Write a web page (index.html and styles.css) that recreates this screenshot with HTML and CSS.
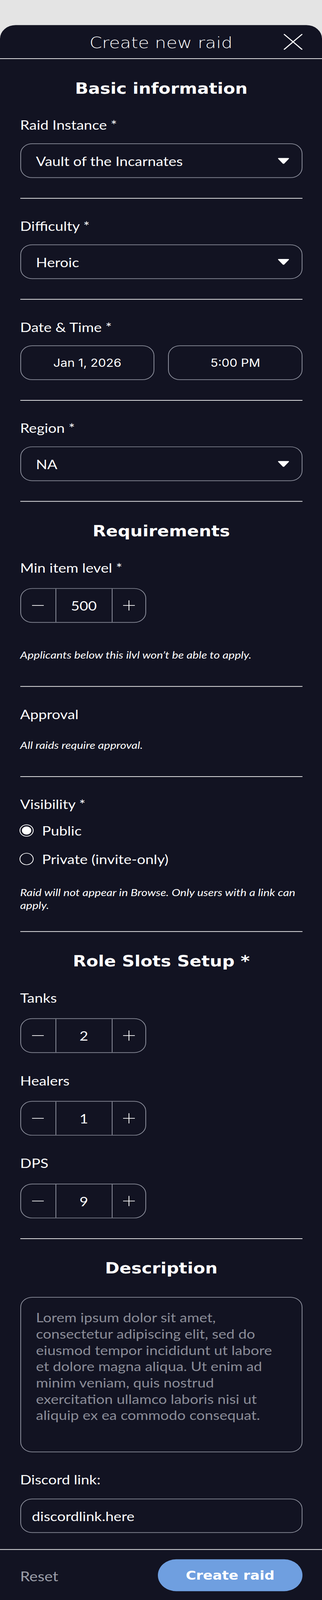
FILE: index.html
```html
<!DOCTYPE html>
<html lang="en">
<head>
<meta charset="utf-8">
<title>Create new raid</title>
<link rel="stylesheet" href="styles.css">
</head>
<body>
<div class="page">
<div class="sheet">
  <header class="sheet-head">
    <h1 class="sheet-title">Create new raid</h1>
    <button class="close" type="button" aria-label="Close">
      <svg viewBox="0 0 48 47" width="48" height="47"><path d="M1.5 1.5 L46.5 45.5 M46.5 1.5 L1.5 45.5" fill="none" stroke="#fff" stroke-width="3" stroke-linecap="round"/></svg>
    </button>
  </header>

  <main class="sheet-body">
    <h2 class="section-title">Basic information</h2>

    <div class="field">
      <div class="label">Raid Instance *</div>
      <div class="control select">
        <span>Vault of the Incarnates</span>
        <svg class="caret" viewBox="0 0 31 19" width="31" height="19"><path d="M3.5 1 H27.5 Q31 1 28.8 4 L17.6 17.2 Q15.5 19.4 13.4 17.2 L2.2 4 Q0 1 3.5 1 Z" fill="#fff"/></svg>
      </div>
    </div>
    <div class="rule"></div>

    <div class="field">
      <div class="label">Difficulty *</div>
      <div class="control select">
        <span>Heroic</span>
        <svg class="caret" viewBox="0 0 31 19" width="31" height="19"><path d="M3.5 1 H27.5 Q31 1 28.8 4 L17.6 17.2 Q15.5 19.4 13.4 17.2 L2.2 4 Q0 1 3.5 1 Z" fill="#fff"/></svg>
      </div>
    </div>
    <div class="rule"></div>

    <div class="field">
      <div class="label">Date &amp; Time *</div>
      <div class="datetime">
        <div class="control picker">Jan 1, 2026</div>
        <div class="control picker">5:00 PM</div>
      </div>
    </div>
    <div class="rule"></div>

    <div class="field">
      <div class="label">Region *</div>
      <div class="control select">
        <span>NA</span>
        <svg class="caret" viewBox="0 0 31 19" width="31" height="19"><path d="M3.5 1 H27.5 Q31 1 28.8 4 L17.6 17.2 Q15.5 19.4 13.4 17.2 L2.2 4 Q0 1 3.5 1 Z" fill="#fff"/></svg>
      </div>
    </div>
    <div class="rule"></div>

    <h2 class="section-title">Requirements</h2>

    <div class="field stepper-field">
      <div class="label">Min item level *</div>
      <div class="stepper">
        <span class="step minus"><i class="bar-h"></i></span>
        <span class="step-value">500</span>
        <span class="step plus"><i class="bar-h"></i><i class="bar-v"></i></span>
      </div>
    </div>
    <p class="hint hint-ilvl">Applicants below this ilvl won’t be able to apply.</p>
    <div class="rule"></div>

    <div class="field">
      <div class="label">Approval</div>
    </div>
    <p class="hint hint-approval">All raids require approval.</p>
    <div class="rule"></div>

    <div class="field">
      <div class="label">Visibility *</div>
      <div class="radios">
        <div class="radio-row"><span class="radio checked"></span><span class="radio-text">Public</span></div>
        <div class="radio-row"><span class="radio"></span><span class="radio-text">Private (invite-only)</span></div>
      </div>
    </div>
    <p class="hint hint-visibility"><span class="nowrap">Raid will not appear in Browse. Only users with a link can</span><br>apply.</p>
    <div class="rule"></div>

    <h2 class="section-title">Role Slots Setup *</h2>

    <div class="field stepper-field">
      <div class="label">Tanks</div>
      <div class="stepper">
        <span class="step minus"><i class="bar-h"></i></span>
        <span class="step-value">2</span>
        <span class="step plus"><i class="bar-h"></i><i class="bar-v"></i></span>
      </div>
    </div>
    <div class="field stepper-field spaced">
      <div class="label">Healers</div>
      <div class="stepper">
        <span class="step minus"><i class="bar-h"></i></span>
        <span class="step-value">1</span>
        <span class="step plus"><i class="bar-h"></i><i class="bar-v"></i></span>
      </div>
    </div>
    <div class="field stepper-field spaced">
      <div class="label">DPS</div>
      <div class="stepper">
        <span class="step minus"><i class="bar-h"></i></span>
        <span class="step-value">9</span>
        <span class="step plus"><i class="bar-h"></i><i class="bar-v"></i></span>
      </div>
    </div>
    <div class="rule"></div>

    <h2 class="section-title">Description</h2>

    <div class="textarea">Lorem ipsum dolor sit amet,
consectetur adipiscing elit, sed do
eiusmod tempor incididunt ut labore
et dolore magna aliqua. Ut enim ad
minim veniam, quis nostrud
exercitation ullamco laboris nisi ut
aliquip ex ea commodo consequat.</div>

    <div class="field link-field">
      <div class="label">Discord link:</div>
      <div class="control text-input">discordlink.here</div>
    </div>
  </main>

  <footer class="sheet-foot">
    <button class="reset" type="button">Reset</button>
    <button class="create" type="button">Create raid</button>
  </footer>
</div>
</div>
<script src="script.js"></script>
</body>
</html>
```

FILE: styles.css
```css
* { box-sizing: border-box; }

html, body {
  margin: 0;
  padding: 0;
  height: 100%;
  overflow: hidden;
}

body {
  background: #e4e4e4;
  font-family: "Lato", "Noto Sans", sans-serif;
  color: #ffffff;
}

/* The page is drawn for a 4720px tall window; --fit (set by script.js)
   stays 1 there and only squeezes it when the window is shorter. */
.page {
  height: 4720px;
  padding-top: 74px;
  transform: scaleY(var(--fit, 1));
  transform-origin: 0 0;
}

.sheet {
  background: #121322;
  border-radius: 40px 40px 0 0;
  height: 4646px;
  overflow: hidden;
}

/* header */
.sheet-head {
  height: 100px;
  padding-top: 5px;
  border-bottom: 2px solid #ffffff;
  display: grid;
  grid-template-columns: 1fr auto 1fr;
  align-items: center;
}

.sheet-title {
  grid-column: 2;
  margin: 0;
  font-family: "DejaVu Sans", sans-serif;
  font-weight: 200;
  font-size: 46px;
  line-height: 1;
  color: #ffffff;
}

.close {
  grid-column: 3;
  justify-self: end;
  margin: 0 50px 4px 0;
  padding: 0;
  width: 48px;
  height: 47px;
  border: 0;
  background: none;
  display: block;
}
.close svg { display: block; }

/* body */
.sheet-body {
  padding: 0 50px 0 51.5px;
}

.section-title {
  margin: 60px 0 57px;
  font-family: "DejaVu Sans", sans-serif;
  font-weight: 700;
  font-size: 44.5px;
  line-height: 54px;
  text-align: center;
  color: #ffffff;
}

.rule {
  height: 2px;
  background: #ffffff;
  margin: 59px 0 57px;
}

.field { display: block; }
.field.spaced { margin-top: 58px; }

.label {
  font-size: 38px;
  line-height: 46px;
  color: #ffffff;
}

.control {
  border: 2px solid #8b8e9b;
  border-radius: 30px;
  height: 102px;
  margin-top: 32px;
}

.select {
  display: flex;
  align-items: center;
  padding: 0 31px 0 38.5px;
  font-size: 38px;
  color: #ffffff;
}
.select span { margin-top: 2px; }
.select .caret { margin-left: auto; display: block; }

.datetime {
  display: grid;
  grid-template-columns: 1fr 1fr;
  column-gap: 35px;
}
.picker {
  display: flex;
  align-items: center;
  justify-content: center;
  font-family: "Inter", "Liberation Sans", sans-serif;
  font-size: 32px;
  color: #ffffff;
}

/* steppers */
.stepper {
  margin-top: 38px;
  width: 322.5px;
  height: 102px;
  border: 2px solid #8b8e9b;
  border-radius: 30px;
  display: flex;
}
.step {
  position: relative;
  display: block;
}
.step.minus { width: 88px; }
.step.plus { width: 86.5px; border-left: 2px solid #8b8e9b; }
.step-value {
  width: 144px;
  border-left: 2px solid #8b8e9b;
  display: flex;
  align-items: center;
  justify-content: center;
  font-size: 38px;
  color: #ffffff;
}
.bar-h, .bar-v {
  position: absolute;
  background: #ffffff;
  left: 50%;
  top: 50%;
}
.bar-h { width: 30px; height: 2px; transform: translate(-50%, -50%); }
.bar-v { width: 2px; height: 30px; transform: translate(-50%, -50%); }
.minus .bar-h { margin-left: -1px; }

/* hints */
.hint {
  margin: 0;
  font-style: italic;
  font-size: 30px;
  line-height: 38px;
  color: #ffffff;
}
.hint .nowrap { white-space: nowrap; }
.hint-ilvl { margin-top: 75px; margin-bottom: 74px; }
.hint-approval { margin-top: 49px; margin-bottom: 74px; }
.hint-visibility { margin-top: 48px; margin-bottom: 0; }

/* radios */
.radios {
  margin-top: 25px;
  display: flex;
  flex-direction: column;
  gap: 24px;
}
.radio-row {
  height: 60px;
  display: flex;
  align-items: center;
  gap: 22px;
}
.radio {
  width: 36px;
  height: 36px;
  border: 2px solid #ffffff;
  border-radius: 50%;
  margin-left: -2px;
  position: relative;
  flex: none;
}
.radio.checked { border-width: 2.5px; }
.radio.checked::after {
  content: "";
  position: absolute;
  left: 50%;
  top: 50%;
  width: 24px;
  height: 24px;
  border-radius: 50%;
  background: #ffffff;
  transform: translate(-50%, -50%);
}
.radio-text {
  font-size: 38px;
  line-height: 46px;
  color: #ffffff;
}

/* description */
.textarea {
  height: 458px;
  border: 2px solid #8b8e9b;
  border-radius: 30px;
  padding: 34px 30px 0 38.5px;
  font-size: 38px;
  line-height: 48px;
  color: #8b8d98;
  white-space: pre;
  overflow: hidden;
}

.link-field { margin-top: 57px; }
.text-input {
  margin-top: 34px;
  height: 101px;
  display: flex;
  align-items: center;
  padding-left: 28px;
  font-size: 38px;
  color: #ffffff;
}

/* footer */
.sheet-foot {
  margin-top: 48px;
  border-top: 2px solid #ffffff;
  padding: 28px 50px 0 51.5px;
  display: flex;
  justify-content: space-between;
  align-items: center;
}
.reset {
  border: 0;
  background: none;
  padding: 0;
  margin-top: 6px;
  font-family: "Lato", "Noto Sans", sans-serif;
  font-size: 40px;
  color: #9b9ea8;
}
.create {
  width: 370px;
  height: 94px;
  border: 0;
  border-radius: 47px;
  background: #6f9fe0;
  color: #ffffff;
  font-family: "DejaVu Sans", sans-serif;
  font-weight: 700;
  font-size: 36px;
  padding: 0;
}
```

FILE: script.js
```js
(function () {
  // The layout is drawn for a 4720px tall window. If the window we get is
  // shorter, squeeze the page vertically so the whole form stays visible.
  var designHeight = 4720;
  var h = window.innerHeight;
  var fit = h > 0 && h < designHeight ? h / designHeight : 1;
  document.documentElement.style.setProperty('--fit', String(fit));
})();
```
